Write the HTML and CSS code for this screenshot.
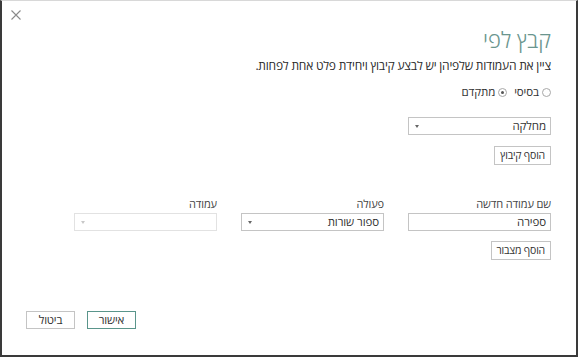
FILE: index.html
```html
<!DOCTYPE html>
<html lang="he" dir="rtl">
<head>
  <meta charset="UTF-8">
  <title>קבץ לפי</title>
  <link rel="stylesheet" href="styles.css">
</head>
<body>
  <div class="dialog">
    <button class="close" title="סגור">
      <svg width="10" height="10" viewBox="0 0 10 10"><path d="M0.5 0.5 L9.5 9.5 M9.5 0.5 L0.5 9.5" stroke="#8a8a8a" stroke-width="1.1" fill="none"/></svg>
    </button>

    <h1 class="title">קבץ לפי</h1>
    <p class="desc">ציין את העמודות שלפיהן יש לבצע קיבוץ ויחידת פלט אחת לפחות.</p>

    <div class="modes">
      <label class="radio"><span class="dot"></span>בסיסי</label>
      <label class="radio checked"><span class="dot"></span>מתקדם</label>
    </div>

    <!-- קיבוץ -->
    <div class="group-list">
      <div class="select">מחלקה<span class="arrow"></span></div>
    </div>
    <button class="btn add-group">הוסף קיבוץ</button>

    <!-- מצבורים -->
    <div class="agg-grid">
      <div class="field">
        <div class="label">שם עמודה חדשה</div>
        <div class="input">ספירה</div>
      </div>
      <div class="field">
        <div class="label">פעולה</div>
        <div class="select">ספור שורות<span class="arrow"></span></div>
      </div>
      <div class="field">
        <div class="label">עמודה</div>
        <div class="select disabled"><span class="arrow"></span></div>
      </div>
    </div>
    <button class="btn add-agg">הוסף מצבור</button>

    <div class="footer">
      <button class="btn primary">אישור</button>
      <button class="btn">ביטול</button>
    </div>
  </div>
</body>
</html>
```

FILE: styles.css
```css
html, body {
  margin: 0;
  background: white;
}
body {
  font-family: "Open Sans", "DejaVu Sans", sans-serif;
  color: #333;
  font-size: 12px;
}
.dialog {
  position: relative;
  box-sizing: border-box;
  width: 578px;
  height: 357px;
  padding: 24px 25px 0 24px;
  border: 2px solid #3a3a3a;
  border-top: 1px solid #d8d8d8;
}
.close {
  position: absolute;
  top: 8px;
  left: 8px;
  width: 12px;
  height: 12px;
  padding: 0;
  border: none;
  background: none;
  display: flex;
  align-items: center;
  justify-content: center;
}
.title {
  margin: 0;
  font-size: 22px;
  line-height: 28px;
  font-weight: 300;
  color: #6a958e;
}
.desc {
  margin: 4px 0 0;
  font-size: 12px;
  line-height: 18px;
  letter-spacing: -0.2px;
  color: #2a2a2a;
}
.modes {
  display: flex;
  gap: 7px;
  margin-top: 8px;
  line-height: 18px;
  font-size: 11.5px;
  letter-spacing: -0.1px;
}
.radio {
  display: flex;
  align-items: center;
  gap: 3px;
  color: #333;
}
.dot {
  box-sizing: border-box;
  width: 9px;
  height: 9px;
  border: 1px solid #a8a8a8;
  border-radius: 50%;
  display: flex;
  align-items: center;
  justify-content: center;
}
.radio.checked .dot::after {
  content: "";
  width: 3px;
  height: 3px;
  border-radius: 50%;
  background: #555;
}
.group-list {
  margin-top: 16px;
  width: 143px;
}
.select, .input {
  position: relative;
  box-sizing: border-box;
  height: 18px;
  padding: 0 4px;
  border: 1px solid #c4c4c4;
  font-size: 11.5px;
  line-height: 16px;
  letter-spacing: -0.1px;
  color: #333;
  background: white;
}
.arrow {
  position: absolute;
  left: 6px;
  top: 7px;
  width: 0;
  height: 0;
  border-left: 2px solid transparent;
  border-right: 2px solid transparent;
  border-top: 3px solid #666;
}
.select.disabled {
  border-color: #e2e2e2;
}
.select.disabled .arrow {
  border-top-color: #c8c8c8;
}
.btn {
  box-sizing: border-box;
  height: 19px;
  padding: 0 5px;
  border: 1px solid #c4c4c4;
  background: white;
  font-family: inherit;
  font-size: 10.5px;
  line-height: 17px;
  letter-spacing: -0.2px;
  color: #333;
  display: block;
}
.add-group {
  margin-top: 11px;
}
.agg-grid {
  display: grid;
  grid-template-columns: repeat(3, 143px);
  gap: 24px;
  margin-top: 31px;
}
.label {
  font-size: 11px;
  line-height: 16px;
  letter-spacing: -0.1px;
  margin-bottom: 1px;
  color: #444;
}
.add-agg {
  margin-top: 10px;
}
.footer {
  display: flex;
  justify-content: flex-end;
  gap: 12px;
  margin-top: 51px;
}
.footer .btn {
  width: 49px;
  height: 18px;
  font-size: 11.5px;
  line-height: 16px;
}
.btn.primary {
  border-color: #5a958b;
}
```
